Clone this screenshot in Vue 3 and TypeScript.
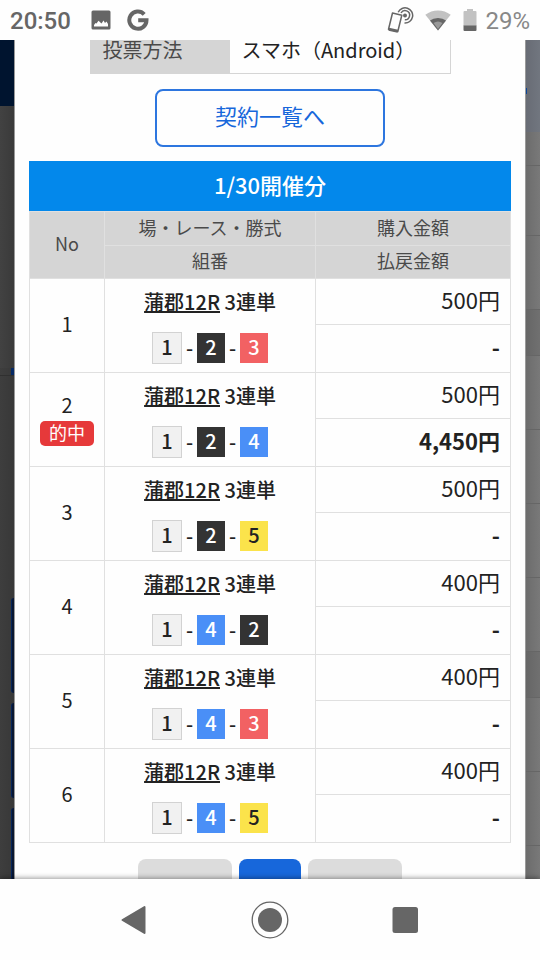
<script setup lang="ts">
interface Bet {
  no: number
  hit: boolean
  race: string
  kind: string
  boats: number[]
  amount: string
  payout: string
}

const race = '蒲郡12R'
const kind = '3連単'

const bets: Bet[] = [
  { no: 1, hit: false, race, kind, boats: [1, 2, 3], amount: '500円', payout: '-' },
  { no: 2, hit: true, race, kind, boats: [1, 2, 4], amount: '500円', payout: '4,450円' },
  { no: 3, hit: false, race, kind, boats: [1, 2, 5], amount: '500円', payout: '-' },
  { no: 4, hit: false, race, kind, boats: [1, 4, 2], amount: '400円', payout: '-' },
  { no: 5, hit: false, race, kind, boats: [1, 4, 3], amount: '400円', payout: '-' },
  { no: 6, hit: false, race, kind, boats: [1, 4, 5], amount: '400円', payout: '-' },
]

const backdropRows: string[] = ['low', 'mid', 'tall', 'short', 'tall', 'tall', 'tall', 'tall', 'short', 'tall', 'tall', 'tall']
</script>

<template>
  <div class="screen">
    <header class="status">
      <span class="clock">20:50</span>
      <svg class="ic-photo" viewBox="0 0 20 20" width="20" height="20" aria-hidden="true">
        <path fill="#666" fill-rule="evenodd" d="M2 0.500H18Q19.500 0.500 19.500 2V18Q19.500 19.500 18 19.500H2Q0.500 19.500 0.500 18V2Q0.500 0.500 2 0.500ZM3 16.500H17V14L15.500 11.500L14 13L12.500 10.500L10.500 13.500L7.500 10.800L5.500 13.500L4.500 13L3 15Z" />
      </svg>
      <svg class="ic-g" viewBox="0 0 22 22" width="22" height="22" aria-hidden="true">
        <path fill="none" stroke="#666" stroke-width="4" d="M17.200 5.300A8.600 8.600 0 1 0 19.500 11.200H11.200" />
      </svg>
      <span class="grow"></span>
      <svg class="ic-cast" viewBox="0 0 27 26" width="27" height="26" aria-hidden="true">
        <g fill="none" stroke="#666">
          <path stroke-width="1.500" stroke-linejoin="round" d="M5.500 6L14.800 8.200L10.800 24.500L1.500 22.300Z" />
          <path stroke-width="3" d="M1.800 22.200L10.800 24.200" />
          <path stroke-width="1.500" d="M11.200 5.200A7.600 7.600 0 1 1 17.500 16" />
          <path stroke-width="1.500" d="M14 6A4.600 4.600 0 1 1 17.800 12.800" />
        </g>
        <circle cx="18" cy="8.500" r="2" fill="#666" />
      </svg>
      <svg class="ic-wifi" viewBox="0 0 26 21" width="26" height="21" aria-hidden="true">
        <path fill="#c2c2c2" d="M13 20.500L0.300 4.800Q6 0.500 13 0.500T25.700 4.800Z" />
        <path fill="#666" d="M13 20.500L5 10.500Q8 8 13 8T21 10.500Z" />
        <path fill="#999" d="M13 19L8.500 13Q13 10 17.500 13Z" />
      </svg>
      <svg class="ic-batt" viewBox="0 0 14 22" width="14" height="22" aria-hidden="true">
        <path fill="#c2c2c2" d="M4 0H10V2H12.500Q13.500 2 13.500 3V17H0.500V3Q0.500 2 1.500 2H4Z" />
        <path fill="#666" d="M0.500 16.500H13.500V21Q13.500 22 12.500 22H1.500Q0.500 22 0.500 21Z" />
      </svg>
      <span class="level">29%</span>
    </header>

    <div class="view">
      <div class="side left" aria-hidden="true">
        <div class="l-head"></div>
        <div class="l-body"></div>
        <div class="l-mark"></div>
        <div class="l-gap"></div>
        <div class="l-card"></div>
        <div class="l-card"></div>
        <div class="l-card"></div>
      </div>

      <main class="modal">
        <dl class="info">
          <dt>投票方法</dt>
          <dd>スマホ（Android）</dd>
        </dl>

        <button class="list-btn" type="button">契約一覧へ</button>

        <section class="day">
          <h2>1/30開催分</h2>
          <table>
            <colgroup>
              <col class="c-no" />
              <col class="c-race" />
              <col class="c-yen" />
            </colgroup>
            <thead>
              <tr class="h-top">
                <th rowspan="2" class="no">No</th>
                <th>場・レース・勝式</th>
                <th>購入金額</th>
              </tr>
              <tr>
                <th>組番</th>
                <th>払戻金額</th>
              </tr>
            </thead>
            <tbody v-for="bet in bets" :key="bet.no">
              <tr class="r-buy">
                <td rowspan="2" class="no">
                  <span class="num">{{ bet.no }}</span>
                  <span v-if="bet.hit" class="hit">的中</span>
                </td>
                <td rowspan="2" class="race">
                  <p class="title"><a href="#">{{ bet.race }}</a> {{ bet.kind }}</p>
                  <div class="combo">
                    <template v-for="(boat, i) in bet.boats" :key="i">
                      <span v-if="i > 0" class="dash">-</span>
                      <span class="boat" :class="'b' + boat">{{ boat }}</span>
                    </template>
                  </div>
                </td>
                <td class="yen">{{ bet.amount }}</td>
              </tr>
              <tr class="r-pay">
                <td class="yen pay">{{ bet.payout }}</td>
              </tr>
            </tbody>
          </table>
        </section>

        <nav class="pager" aria-label="ページ">
          <button type="button" aria-label="前へ"></button>
          <button type="button" class="current" aria-label="現在のページ"></button>
          <button type="button" aria-label="次へ"></button>
        </nav>
      </main>

      <div class="side right" aria-hidden="true">
        <div class="r-head"><i></i></div>
        <div v-for="(row, i) in backdropRows" :key="i" class="r-row" :class="row"></div>
      </div>
    </div>

    <footer class="navbar">
      <button type="button" aria-label="戻る">
        <svg viewBox="0 0 40 40" width="40" height="40">
          <path fill="#666" stroke="#666" stroke-width="2" stroke-linejoin="round" d="M7.500 20L29.500 7V33Z" />
        </svg>
      </button>
      <button type="button" aria-label="ホーム">
        <svg viewBox="0 0 40 40" width="40" height="40">
          <circle cx="20" cy="20" r="17.800" fill="none" stroke="#666" stroke-width="1.300" />
          <circle cx="20" cy="20" r="12" fill="#666" />
        </svg>
      </button>
      <button type="button" aria-label="履歴">
        <svg viewBox="0 0 40 40" width="40" height="40">
          <rect x="7.500" y="7" width="25.500" height="26" rx="2.500" fill="#666" />
        </svg>
      </button>
    </footer>
  </div>
</template>

<style>
body {
  margin: 0;
}
</style>

<style scoped>
.screen {
  box-sizing: border-box;
  display: flex;
  flex-direction: column;
  height: 100vh;
  overflow: hidden;
  background: #fefefe;
  color: #222;
  font-family: "Noto Sans CJK JP", "Noto Sans", sans-serif;
}

.screen button {
  padding: 0;
  border: 0;
  background: none;
  font-family: inherit;
}

/* status bar */
.status {
  display: flex;
  flex: none;
  align-items: center;
  height: 40px;
  padding: 0 10px;
  font: 500 24px/40px Roboto, sans-serif;
  color: #666;
}

.status svg {
  flex: none;
}

.status .clock,
.status .level {
  padding-top: 2px;
}

.status .level {
  color: #888;
  font-weight: 400;
}

.ic-photo {
  margin-left: 20px;
}

.ic-g {
  margin-left: 16px;
}

.grow {
  flex: 1;
}

.ic-wifi {
  margin-left: 11px;
}

.ic-batt {
  margin: 0 8px 0 12px;
}

/* page area with the dimmed backdrop on both sides */
.view {
  display: flex;
  flex: 1;
  min-height: 0;
}

.side {
  display: flex;
  flex: none;
  flex-direction: column;
  width: 14px;
  overflow: hidden;
}

.side div {
  flex: none;
}

.left {
  background: linear-gradient(90deg, #3e3e3e, #383838);
  border-right: 1px solid #999;
}

.l-head {
  height: 66px;
  background: #00142f;
}

.l-body {
  height: 262px;
  background: linear-gradient(90deg, #424242, #3a3a3a);
}

.l-mark {
  align-self: flex-end;
  width: 3px;
  height: 7px;
  background: #062a66;
}

.l-gap {
  height: 222px;
  border-top: 1px solid #303030;
}

.l-card {
  align-self: flex-end;
  box-sizing: border-box;
  width: 3px;
  height: 95px;
  margin-bottom: 10px;
  border-left: 1px solid #06255c;
  border-radius: 6px 0 0 6px;
  background: #0a1730;
}

.right {
  background: #757575;
  border-left: 1px solid #999;
}

.r-head {
  height: 92px;
  padding-top: 48px;
  box-sizing: border-box;
  background: linear-gradient(90deg, #686c75, #71767f);
}

.r-head i {
  display: block;
  width: 1px;
  height: 6px;
  background: #0a4599;
}

.r-row {
  box-sizing: border-box;
  border-bottom: 1px solid #666;
  background: linear-gradient(90deg, #6c6c6c, #797979);
}

.low {
  height: 34px;
}

.mid {
  height: 70px;
}

.tall {
  height: 74px;
}

.short {
  height: 46px;
  background: linear-gradient(90deg, #666, #707070);
}

/* dialog */
.modal {
  flex: 1;
  min-width: 0;
  padding: 0 14px;
  background: #fefefe;
}

.info {
  display: flex;
  box-sizing: border-box;
  max-width: 361px;
  margin: 0 auto 15px;
  border: 1px solid #d5d5d5;
  border-top: 0;
  font-size: 20px;
  line-height: 20px;
}

.info dt,
.info dd {
  padding: 0 0 13px 12px;
}

.info dt {
  box-sizing: border-box;
  width: 139px;
  background: #d5d5d5;
  color: #4a4a4a;
}

.info dd {
  flex: 1;
  margin: 0;
}

.screen .list-btn {
  display: block;
  box-sizing: border-box;
  width: 230px;
  height: 58px;
  margin: 0 auto 14px;
  padding-bottom: 6px;
  border: 2px solid #2d76df;
  border-radius: 8px;
  color: #1767db;
  font-size: 22px;
}

.day h2 {
  margin: 0;
  padding-bottom: 4px;
  background: #0388eb;
  color: #fff;
  font-size: 22px;
  font-weight: 500;
  line-height: 46px;
  text-align: center;
}

table {
  width: 100%;
  border-collapse: collapse;
  table-layout: fixed;
}

.c-no {
  width: 75px;
}

.c-yen {
  width: 195px;
}

th,
td {
  padding: 0;
  border: 1px solid #e0e0e0;
  text-align: center;
}

th {
  height: 33px;
  background: #d5d5d5;
  color: #4a4a4a;
  font-size: 18px;
  font-weight: 400;
  line-height: 24px;
}

.h-top th {
  height: 34px;
}

th,
.yen {
  padding-bottom: 4px;
  box-sizing: border-box;
}

.r-buy {
  height: 46px;
}

.r-pay {
  height: 48px;
}

.num {
  display: block;
  font-size: 20px;
  line-height: 26px;
}

.hit {
  display: block;
  margin: 3px 10px -3px;
  padding-bottom: 2px;
  border-radius: 5px;
  background: #e6393a;
  color: #fff;
  font-size: 18px;
  line-height: 23px;
}

.no {
  padding-bottom: 4px;
}

.title {
  margin: 0 0 15px;
  font-size: 20px;
  font-weight: 500;
  line-height: 30px;
}

.title a {
  color: inherit;
  text-decoration: underline;
  text-decoration-thickness: 2px;
  text-underline-offset: 1px;
}

.combo {
  display: flex;
  align-items: center;
  justify-content: center;
  font-size: 20px;
  font-weight: 500;
  line-height: 28px;
}

.dash {
  width: 15px;
}

.boat {
  width: 28px;
  padding-bottom: 2px;
}

.b1 {
  border: 1px solid #d2d2d2;
  background: #f1f1f1;
}

.b2 {
  background: #333;
  color: #fff;
}

.b3 {
  background: #f26163;
  color: #fff;
}

.b4 {
  background: #4a8ff7;
  color: #fff;
}

.b5 {
  background: #fbe34b;
}

.yen {
  padding-right: 10px;
  padding-bottom: 6px;
  font-size: 22px;
  line-height: 30px;
  text-align: right;
}

.pay {
  font-weight: 600;
}

.pager {
  display: flex;
  justify-content: center;
  gap: 7px;
  margin-top: 16px;
}

.pager button {
  width: 94px;
  height: 50px;
  border-radius: 8px;
  background: #dcdcdc;
}

.pager .current {
  width: 62px;
  background: #1767db;
}

/* system navigation */
.navbar {
  position: relative;
  display: flex;
  flex: none;
  align-items: center;
  justify-content: center;
  gap: 95px;
  height: 81px;
  background: #fefefe;
  box-shadow: 0 -1px 5px rgba(0, 0, 0, 0.4);
}

.navbar svg {
  display: block;
}
</style>
